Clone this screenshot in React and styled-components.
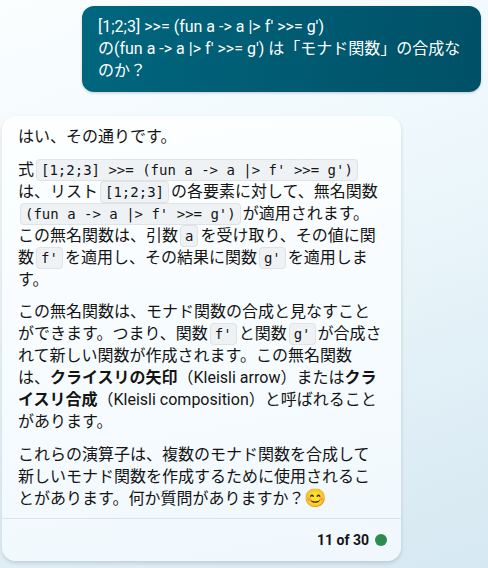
import React from "react";
import styled, { createGlobalStyle } from "styled-components";

const GlobalStyle = createGlobalStyle`
  html, body {
    margin: 0;
    padding: 0;
    height: 100%;
  }
  #root {
    height: 100%;
  }
`;

const App = () => {
  return (
    <Page>
      <GlobalStyle />
      <UserBubble>
        [1;2;3] &gt;&gt;= (fun a -&gt; a |&gt; f' &gt;&gt;= g')
        <br />
        の(fun a -&gt; a |&gt; f' &gt;&gt;= g') は「モナド関数」の合成なのか？
      </UserBubble>
      <AnswerCard>
        <AnswerBody>
          <Paragraph>はい、その通りです。</Paragraph>
          <Paragraph>
            式<Code>[1;2;3] &gt;&gt;= (fun a -&gt; a |&gt; f' &gt;&gt;= g')</Code>
            は、リスト<Code>[1;2;3]</Code>の各要素に対して、無名関数
            <Code>(fun a -&gt; a |&gt; f' &gt;&gt;= g')</Code>
            が適用されます。この無名関数は、引数<Code>a</Code>
            を受け取り、その値に関数<Code>f'</Code>
            を適用し、その結果に関数<Code>g'</Code>を適用します。
          </Paragraph>
          <Paragraph>
            この無名関数は、モナド関数の合成と見なすことができます。つまり、関数
            <Code>f'</Code>と関数<Code>g'</Code>
            が合成されて新しい関数が作成されます。この無名関数
            <br />
            は、<strong>クライスリの矢印</strong>（Kleisli arrow）または
            <strong>クライスリ合成</strong>（Kleisli composition）と呼ばれることがあります。
          </Paragraph>
          <Paragraph>
            これらの演算子は、複数のモナド関数を合成して新しいモナド関数を作成するために使用されることがあります。何か質問がありますか？
            <Emoji>😊</Emoji>
          </Paragraph>
        </AnswerBody>
        <AnswerFooter>
          <TurnCount>11 of 30</TurnCount>
          <StatusDot />
        </AnswerFooter>
      </AnswerCard>
    </Page>
  );
};

const Page = styled.div`
  box-sizing: border-box;
  width: 488px;
  height: 568px;
  overflow: hidden;
  padding: 6px 7px 0 2px;
  display: flex;
  flex-direction: column;
  gap: 24px;
  background: linear-gradient(160deg, #fbfeff 0%, #eef8fc 40%, #d6e8f2 100%);
  font-family: Roboto, "Noto Sans CJK JP", sans-serif;
  font-size: 16px;
  line-height: 22px;
  color: #141414;
`;

const UserBubble = styled.div`
  box-sizing: border-box;
  width: 399px;
  align-self: flex-end;
  padding: 10px 16px 10px;
  border-radius: 12px;
  background: linear-gradient(100deg, #00677f 0%, #005066 100%);
  color: #fff;
  box-shadow: 0 1px 3px rgba(0, 0, 0, 0.2);
`;

const AnswerCard = styled.div`
  width: 399px;
  height: 445px;
  display: flex;
  flex-direction: column;
  border-radius: 14px;
  background: linear-gradient(170deg, #fdffff 0%, #f0f8fd 100%);
  box-shadow: 0 2px 4px rgba(0, 0, 0, 0.14);
`;

const AnswerBody = styled.div`
  flex: 1;
  min-height: 0;
  padding: 10px 16px 0;
`;

const Paragraph = styled.p`
  margin: 0 0 10.5px;

  strong {
    font-weight: 700;
  }
`;

const Code = styled.code`
  font-family: "DejaVu Sans Mono", monospace;
  font-size: 14px;
  line-height: 1;
  white-space: nowrap;
  padding: 2px 4px;
  margin: 0 2px;
  background: #eff2f4;
  border: 1px solid #dfe3e6;
  border-radius: 4px;
`;

const Emoji = styled.span`
  font-size: 18px;
  line-height: 1;
`;

const AnswerFooter = styled.div`
  height: 43px;
  box-sizing: border-box;
  flex: none;
  display: flex;
  align-items: center;
  justify-content: flex-end;
  gap: 6px;
  padding: 0 14px;
  border-top: 1px solid #dde3e8;
`;

const TurnCount = styled.span`
  font-size: 14px;
  font-weight: 700;
`;

const StatusDot = styled.span`
  width: 12px;
  height: 12px;
  border-radius: 50%;
  background: #2e8b4f;
`;

export default App;
